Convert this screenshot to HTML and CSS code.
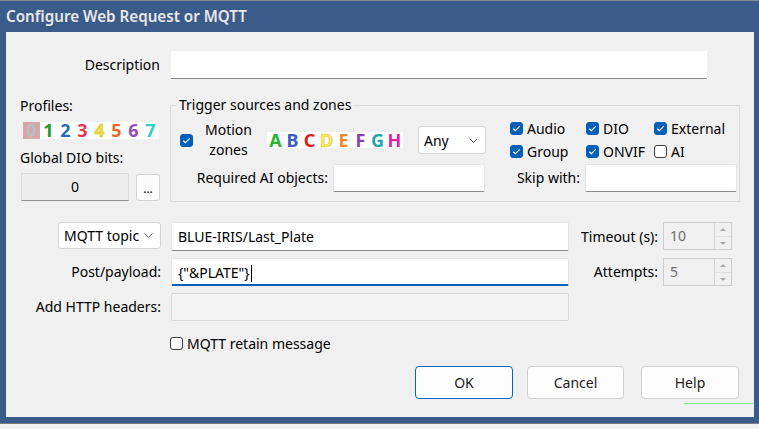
FILE: index.html
```html
<!DOCTYPE html>
<html lang="en">
<head>
<meta charset="utf-8">
<title>Configure Web Request or MQTT</title>
<link rel="stylesheet" href="styles.css">
</head>
<body>
<div class="screen">
  <div class="window">
    <div class="titlebar">Configure Web Request or MQTT</div>
    <div class="content">
      <div class="desc-row">
        <span class="lbl desc-lbl">Description</span>
        <div class="input desc-input"></div>
      </div>

      <div class="mid">
        <div class="profiles">
          <div class="plabel">Profiles:</div>
          <div class="digits">
            <span class="d0">0</span><span class="d1">1</span><span class="d2">2</span><span class="d3">3</span><span class="d4">4</span><span class="d5">5</span><span class="d6">6</span><span class="d7">7</span>
          </div>
          <div class="plabel dio-lbl">Global DIO bits:</div>
          <div class="dio-row">
            <div class="dio-box">0</div>
            <div class="dots-btn">...</div>
          </div>
        </div>

        <div class="group">
          <div class="group-title">Trigger sources and zones</div>
          <div class="g-row1">
            <span class="cb checked motion-cb"><svg width="13" height="13" viewBox="0 0 13 13"><path d="M3.3 6.7 L5.4 8.7 L9.7 4.4" fill="none" stroke="#fff" stroke-width="1.2"/></svg></span>
            <div class="motion">Motion<br>zones</div>
            <div class="letters">
              <span class="lA">A</span><span class="lB">B</span><span class="lC">C</span><span class="lD">D</span><span class="lE">E</span><span class="lF">F</span><span class="lG">G</span><span class="lH">H</span>
            </div>
            <div class="select any"><span>Any</span><svg width="9" height="5" viewBox="0 0 9 5"><path d="M0.5 0.5 L4.5 4.5 L8.5 0.5" fill="none" stroke="#606060" stroke-width="1"/></svg></div>
            <div class="cbgrid">
              <div class="cbitem"><span class="cb checked"><svg width="13" height="13" viewBox="0 0 13 13"><path d="M3.3 6.7 L5.4 8.7 L9.7 4.4" fill="none" stroke="#fff" stroke-width="1.2"/></svg></span>Audio</div>
              <div class="cbitem"><span class="cb checked"><svg width="13" height="13" viewBox="0 0 13 13"><path d="M3.3 6.7 L5.4 8.7 L9.7 4.4" fill="none" stroke="#fff" stroke-width="1.2"/></svg></span>DIO</div>
              <div class="cbitem"><span class="cb checked"><svg width="13" height="13" viewBox="0 0 13 13"><path d="M3.3 6.7 L5.4 8.7 L9.7 4.4" fill="none" stroke="#fff" stroke-width="1.2"/></svg></span>External</div>
              <div class="cbitem"><span class="cb checked"><svg width="13" height="13" viewBox="0 0 13 13"><path d="M3.3 6.7 L5.4 8.7 L9.7 4.4" fill="none" stroke="#fff" stroke-width="1.2"/></svg></span>Group</div>
              <div class="cbitem"><span class="cb checked"><svg width="13" height="13" viewBox="0 0 13 13"><path d="M3.3 6.7 L5.4 8.7 L9.7 4.4" fill="none" stroke="#fff" stroke-width="1.2"/></svg></span>ONVIF</div>
              <div class="cbitem"><span class="cb"></span>AI</div>
            </div>
          </div>
          <div class="g-row2">
            <span class="lbl req-lbl">Required AI objects:</span>
            <div class="input req-input"></div>
            <span class="lbl skip-lbl">Skip with:</span>
            <div class="input skip-input"></div>
          </div>
        </div>
      </div>

      <div class="lower">
        <div class="lrow r1">
          <div class="c1"><div class="select mqtt"><span>MQTT topic</span><svg width="9" height="5" viewBox="0 0 9 5"><path d="M0.5 0.5 L4.5 4.5 L8.5 0.5" fill="none" stroke="#606060" stroke-width="1"/></svg></div></div>
          <div class="c2"><div class="input text-input topic">BLUE-IRIS/Last_Plate</div></div>
          <div class="c3 lbl">Timeout (s):</div>
          <div class="c4">
            <div class="spin"><span class="spin-val">10</span><span class="spin-btns"><span class="up"></span><span class="down"></span></span></div>
          </div>
        </div>
        <div class="lrow r2">
          <div class="c1 lbl">Post/payload:</div>
          <div class="c2"><div class="input text-input focused">{"&amp;PLATE"}<span class="caret"></span></div></div>
          <div class="c3 lbl">Attempts:</div>
          <div class="c4">
            <div class="spin"><span class="spin-val">5</span><span class="spin-btns"><span class="up"></span><span class="down"></span></span></div>
          </div>
        </div>
        <div class="lrow r3">
          <div class="c1 lbl">Add HTTP headers:</div>
          <div class="c2"><div class="input disabled"></div></div>
        </div>
      </div>

      <div class="retain"><span class="cb"></span>MQTT retain message</div>

      <div class="buttons">
        <div class="btn ok">OK</div>
        <div class="btn cancel">Cancel</div>
        <div class="btn help">Help</div>
      </div>
      <div class="artifact"></div>
    </div>
  </div>
</div>
</body>
</html>
```

FILE: styles.css
```css
* { box-sizing: border-box; }

body {
  margin: 0;
  background: #f0f0f0;
  font-family: "Noto Sans", "Open Sans", "DejaVu Sans", sans-serif;
  font-size: 14px;
  color: #000;
}

.screen {
  width: 759px;
  height: 429px;
  overflow: hidden;
}

.window {
  height: 424px;
  background: #3b5b8a;
  border-top: 1px solid #8c8c8c;
  border-bottom: 1px solid #7d7d7d;
}

.titlebar {
  height: 31px;
  line-height: 31px;
  padding-left: 6px;
  color: #e9e9e9;
  font-size: 15.2px;
  font-weight: 600;
}

.content {
  margin: 0 5px 0 6px;
  height: 385px;
  background: #f0f0f0;
  padding-top: 19px;
}

.lbl {
  display: block;
  text-align: right;
  line-height: 28px;
  white-space: nowrap;
}

/* generic text box */
.input {
  background: #fff;
  border: 1px solid #e4e4e4;
  border-bottom: 1px solid #8a8a8a;
  border-radius: 2px;
  height: 28px;
}

.text-input {
  padding-left: 6px;
  line-height: 27px;
  font-size: 14px;
}

.input.focused {
  border-bottom: 2px solid #005fb8;
}

.input.disabled {
  background: #f3f3f3;
  border: 1px solid #d8d8d8;
}

.caret {
  display: inline-block;
  width: 1px;
  height: 17px;
  background: #000;
  vertical-align: -4px;
  margin-left: 1px;
}

/* description */
.desc-row {
  display: flex;
  height: 28px;
}
.desc-lbl { width: 154px; }
.desc-input {
  margin-left: 11px;
  width: 536px;
  border: none;
  border-bottom: 1px solid #8a8a8a;
  border-radius: 0;
}

/* middle */
.mid {
  display: flex;
  margin-top: 16px;
}

.profiles {
  width: 164px;
  padding-left: 14px;
}

.plabel {
  line-height: 20px;
  padding-top: 1px;
}

.digits, .letters {
  display: flex;
  width: 136px;
  background: #fff;
  font-weight: 700;
  font-size: 18px;
}

.digits {
  margin-top: 6px;
  margin-left: 3px;
  height: 17px;
  line-height: 17px;
}

.digits span, .letters span {
  width: 17px;
  text-align: center;
}

.d0 { background: #d6a6aa; color: #bdbdbd; }
.d1 { color: #1f9a2c; }
.d2 { color: #2c6db3; }
.d3 { color: #e6354f; }
.d4 { color: #e9dd3c; -webkit-text-stroke: 0.4px #c9b820; }
.d5 { color: #e96a2b; }
.d6 { color: #9a4eae; }
.d7 { color: #2dcfcf; }

.dio-lbl {
  margin-top: 9px;
  padding-top: 0;
}

.dio-row {
  display: flex;
  margin-top: 5px;
  height: 28px;
}

.dio-box {
  margin-left: 1px;
  width: 108px;
  height: 28px;
  background: #ececec;
  border: 1px solid #dcdcdc;
  border-bottom: 1px solid #8f8f8f;
  text-align: center;
  line-height: 26px;
}

.dots-btn {
  margin-left: 7px;
  margin-top: 1px;
  width: 24px;
  height: 27px;
  background: #fbfbfb;
  border: 1px solid #d2d2d2;
  border-radius: 3px;
  text-align: center;
  line-height: 27px;
  font-size: 12px;
}

/* group box */
.group {
  width: 570px;
  height: 97px;
  margin-top: 10px;
  border: 1px solid #dadada;
}

.group-title {
  width: max-content;
  margin: -10px 0 0 6px;
  padding: 0 2px;
  line-height: 18px;
  background: #f0f0f0;
}

.g-row1 {
  display: flex;
  align-items: center;
  height: 40px;
  margin-top: 6px;
}

.cb {
  display: inline-block;
  flex: none;
  width: 13px;
  height: 13px;
  border: 1px solid #3d3d3d;
  border-radius: 3px;
  background: #fff;
}
.cb svg { display: block; margin: -1px; }
.cb.checked {
  background: #005fb8;
  border-color: #005fb8;
}

.motion-cb { margin-left: 9px; }

.motion {
  margin-left: 5px;
  width: 61px;
  text-align: center;
  line-height: 20px;
}

.letters {
  margin-left: 8px;
  height: 16px;
  line-height: 16px;
}

.lA { color: #2bb52f; }
.lB { color: #3d5ec2; }
.lC { color: #e01b1b; }
.lD { color: #f6e874; -webkit-text-stroke: 0.6px #e2c800; }
.lE { color: #f0892c; }
.lF { color: #8a42ae; }
.lG { color: #22a6a8; }
.lH { color: #e022a6; }

.select {
  display: flex;
  align-items: center;
  justify-content: space-between;
  background: #fff;
  border: 1px solid #d4d4d4;
  border-radius: 3px;
  padding: 0 7px 0 5px;
}

.any {
  margin-left: 15px;
  width: 68px;
  height: 28px;
}

.cbgrid {
  margin-left: 24px;
  display: grid;
  grid-template-columns: 76px 68px auto;
  grid-auto-rows: 23px;
}

.cbitem {
  display: flex;
  align-items: center;
  gap: 4px;
  white-space: nowrap;
}

.g-row2 {
  display: flex;
  height: 28px;
  margin-top: 4px;
}

.req-lbl { width: 157px; }
.req-input { margin-left: 5px; width: 152px; }
.skip-lbl { width: 95px; }
.skip-input { margin-left: 5px; width: 152px; }

/* lower */
.lower { margin-top: 20px; }

.lrow {
  display: flex;
  align-items: flex-start;
}
.r1 { height: 29px; margin-bottom: 7px; }
.r2 { height: 28px; margin-bottom: 7px; }
.r3 { height: 28px; }

.c1 { width: 155px; }
.c2 { margin-left: 10px; width: 398px; }
.c3 { margin-left: 12px; width: 77px; }
.c4 { margin-left: 5px; width: 69px; }

.r1 .lbl { line-height: 29px; }
.topic { height: 29px; line-height: 28px; }

.mqtt {
  margin-left: 52px;
  width: 103px;
  height: 27px;
}

.spin {
  display: flex;
  height: 28px;
  background: #f0f0f0;
  border: 1px solid #cdcdcd;
  color: #6e6e6e;
}
.spin-val {
  flex: 1;
  padding-left: 6px;
  line-height: 26px;
}
.spin-btns {
  width: 17px;
  display: flex;
  flex-direction: column;
  border-left: 1px solid #d6d6d6;
}
.spin-btns span {
  flex: 1;
  position: relative;
}
.spin-btns .up { border-bottom: 1px solid #e0e0e0; }
.spin-btns .up::after, .spin-btns .down::after {
  content: "";
  position: absolute;
  left: 5px;
  border-left: 3px solid transparent;
  border-right: 3px solid transparent;
}
.spin-btns .up::after {
  top: 5px;
  border-bottom: 3px solid #a8a8a8;
}
.spin-btns .down::after {
  top: 5px;
  border-top: 3px solid #a8a8a8;
}

.retain {
  display: flex;
  align-items: center;
  gap: 4px;
  height: 20px;
  margin-top: 12px;
  margin-left: 164px;
}

.buttons {
  display: flex;
  margin-top: 13px;
  height: 33px;
}

.btn {
  height: 33px;
  background: #fdfdfd;
  border: 1px solid #d0d0d0;
  border-radius: 4px;
  text-align: center;
  line-height: 31px;
  font-size: 14px;
  color: #1b1b1b;
}
.ok {
  margin-left: 409px;
  width: 98px;
  border: 1px solid #0067c0;
}
.cancel { margin-left: 14px; width: 97px; }
.help { margin-left: 17px; width: 98px; }

.artifact {
  margin-top: 4px;
  margin-left: 678px;
  width: 70px;
  height: 1px;
  background: #7ff27f;
}
```
